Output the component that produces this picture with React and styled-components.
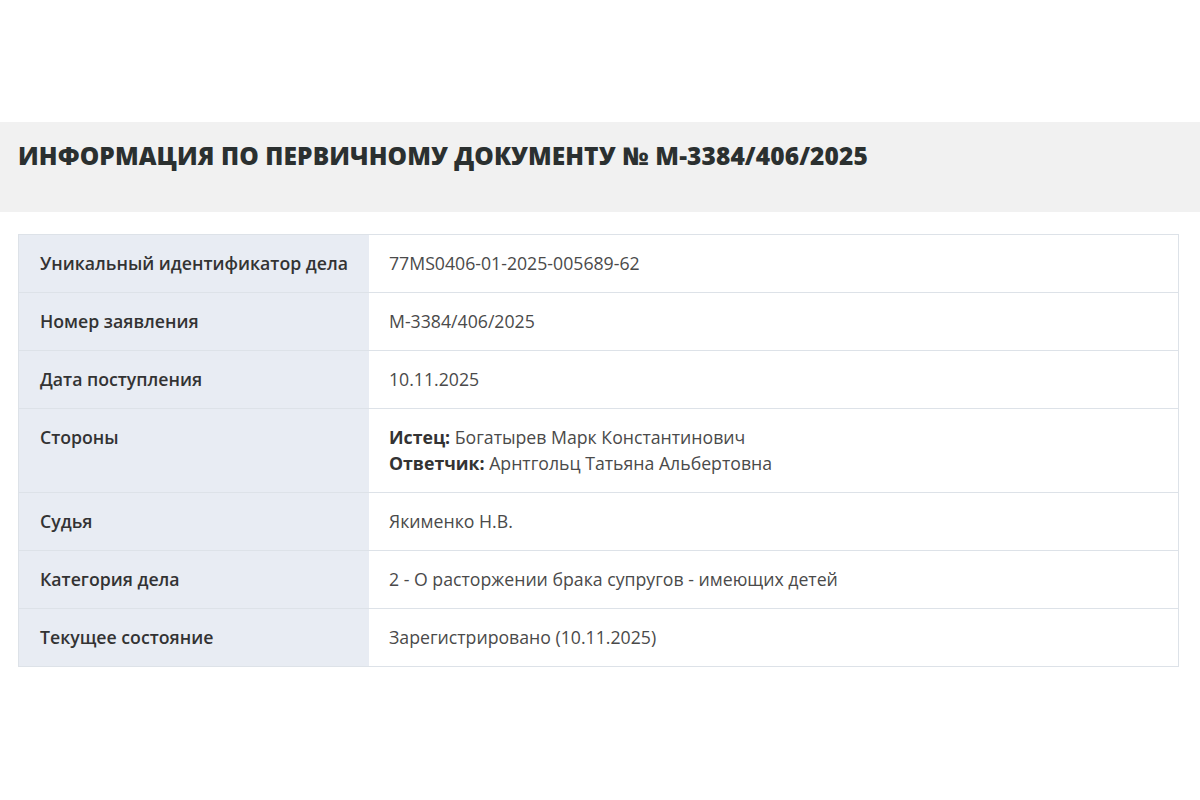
import React from "react";
import styled, { createGlobalStyle } from "styled-components";

const GlobalStyle = createGlobalStyle`
  body {
    margin: 0;
    background: #fff;
    font-family: "Open Sans", "Noto Sans", sans-serif;
  }
`;

const rows = [
  { label: "Уникальный идентификатор дела", value: "77MS0406-01-2025-005689-62" },
  { label: "Номер заявления", value: "М-3384/406/2025" },
  { label: "Дата поступления", value: "10.11.2025" },
  {
    label: "Стороны",
    parties: [
      { role: "Истец:", name: "Богатырев Марк Константинович" },
      { role: "Ответчик:", name: "Арнтгольц Татьяна Альбертовна" },
    ],
  },
  { label: "Судья", value: "Якименко Н.В." },
  { label: "Категория дела", value: "2 - О расторжении брака супругов - имеющих детей" },
  { label: "Текущее состояние", value: "Зарегистрировано (10.11.2025)" },
];

function App() {
  return (
    <Page>
      <GlobalStyle />
      <HeaderBand>
        <Title>Информация по первичному документу № М-3384/406/2025</Title>
      </HeaderBand>
      <Table>
        <tbody>
          {rows.map((row) => (
            <tr key={row.label}>
              <Label>{row.label}</Label>
              <Value>
                {row.parties
                  ? row.parties.map((p) => (
                      <div key={p.role}>
                        <b>{p.role}</b> {p.name}
                      </div>
                    ))
                  : row.value}
              </Value>
            </tr>
          ))}
        </tbody>
      </Table>
    </Page>
  );
}

export default App;

const Page = styled.div`
  padding-top: 122px;
`;

const HeaderBand = styled.div`
  background: #f1f1f1;
  height: 90px;
  box-sizing: border-box;
  padding: 19px 18px 0;
`;

const Title = styled.h1`
  margin: 0;
  font-size: 24.5px;
  line-height: 30px;
  font-weight: 800;
  text-transform: uppercase;
  color: #2b3030;
  letter-spacing: 0.1px;
`;

const Table = styled.table`
  margin: 22px 21px 0 18px;
  width: calc(100% - 39px);
  border-collapse: collapse;
  border: 1px solid #dde2e8;
  font-size: 17.7px;
  line-height: 26px;
`;

const Label = styled.td`
  width: 308px;
  background: #e8ecf3;
  padding: 15px 21px 16px 21px;
  font-weight: 600;
  color: #333;
  vertical-align: top;
  border-bottom: 1px solid #dde2e8;
`;

const Value = styled.td`
  padding: 15px 21px 16px 20px;
  color: #4a4a4a;
  vertical-align: top;
  border-bottom: 1px solid #dde2e8;

  b {
    font-weight: 700;
    color: #333;
  }
`;
